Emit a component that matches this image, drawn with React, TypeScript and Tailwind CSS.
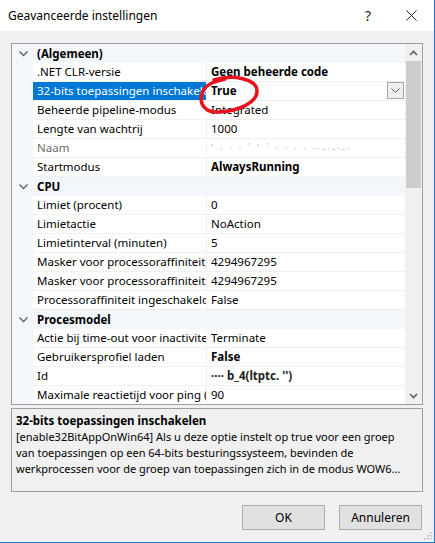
import React from "react";

type Row =
  | { kind: "cat"; label: string }
  | { kind: "prop"; name: string; value: string; bold?: boolean; dim?: boolean; selected?: boolean; blur?: string };

const rows: Row[] = [
  { kind: "cat", label: "(Algemeen)" },
  { kind: "prop", name: ".NET CLR-versie", value: "Geen beheerde code", bold: true },
  { kind: "prop", name: "32-bits toepassingen inschakelen", value: "True", bold: true, selected: true },
  { kind: "prop", name: "Beheerde pipeline-modus", value: "Integrated" },
  { kind: "prop", name: "Lengte van wachtrij", value: "1000" },
  { kind: "prop", name: "Naam", value: "", dim: true, blur: "naam" },
  { kind: "prop", name: "Startmodus", value: "AlwaysRunning", bold: true },
  { kind: "cat", label: "CPU" },
  { kind: "prop", name: "Limiet (procent)", value: "0" },
  { kind: "prop", name: "Limietactie", value: "NoAction" },
  { kind: "prop", name: "Limietinterval (minuten)", value: "5" },
  { kind: "prop", name: "Masker voor processoraffiniteit", value: "4294967295" },
  { kind: "prop", name: "Masker voor processoraffiniteit (64-bits-optie)", value: "4294967295" },
  { kind: "prop", name: "Processoraffiniteit ingeschakeld", value: "False" },
  { kind: "cat", label: "Procesmodel" },
  { kind: "prop", name: "Actie bij time-out voor inactiviteit", value: "Terminate" },
  { kind: "prop", name: "Gebruikersprofiel laden", value: "False", bold: true },
  { kind: "prop", name: "Id", value: "", blur: "id" },
  { kind: "prop", name: "Maximale reactietijd voor ping (seconden)", value: "90" },
];

function Chevron() {
  return (
    <svg width="9" height="6" viewBox="0 0 9 6" className="text-[#606060]">
      <polyline points="0.5,0.5 4.5,4.5 8.5,0.5" fill="none" stroke="currentColor" strokeWidth="1.3" />
    </svg>
  );
}

function BlurValue({ which }: { which: string }) {
  if (which === "naam") {
    return (
      <span className="text-[10px] tracking-[2px] text-[#c4c4c4]">
        ' · ·  ·  ´ ' `    ·  ·   ·   ·   ··-·-·-·
      </span>
    );
  }
  return <span className="font-bold text-[#222]">···· b_4(ltptc.    '')</span>;
}

function GridRow({ row }: { row: Row }) {
  if (row.kind === "cat") {
    return (
      <div className="flex h-[19px] bg-[#f3f6fa]">
        <div className="flex w-[21px] items-center justify-center pl-[1px]">
          <Chevron />
        </div>
        <div className="flex items-center pl-[4px] font-bold text-black">{row.label}</div>
      </div>
    );
  }
  return (
    <div className="flex h-[19px]">
      <div className="w-[21px] bg-[#f3f6fa]" />
      <div
        className={
          "flex w-[174px] items-center overflow-hidden whitespace-nowrap border-b border-r border-[#f0f0f0] pl-[4px] " +
          (row.selected ? "bg-[#0078d7] text-white" : row.dim ? "bg-white text-[#6d6d6d]" : "bg-white text-black")
        }
      >
        {row.name}
      </div>
      <div className="relative flex flex-1 items-center overflow-hidden whitespace-nowrap border-b border-[#f0f0f0] bg-white pl-[4px]">
        {row.blur ? (
          <BlurValue which={row.blur} />
        ) : (
          <span className={row.bold ? "font-bold text-black" : "text-black"}>{row.value}</span>
        )}
        {row.selected && (
          <div className="absolute right-[1px] top-[0px] flex h-[17px] w-[17px] items-center justify-center border border-[#a6a6a6] bg-[#efefef]">
            <svg width="9" height="5" viewBox="0 0 9 5">
              <polyline points="0.5,0.5 4.5,4.5 8.5,0.5" fill="none" stroke="#606060" strokeWidth="1" />
            </svg>
          </div>
        )}
      </div>
    </div>
  );
}

export default function App() {
  return (
    <div
      className="relative flex h-[543px] w-[435px] flex-col overflow-hidden border-b border-r border-[#1a79d1] bg-[#f0f0f0] text-[11.5px] leading-none text-black"
      style={{ fontFamily: '"Noto Sans", "Open Sans", sans-serif' }}
    >
      {/* title bar */}
      <div className="flex h-[31px] items-center bg-white">
        <div className="flex-1 pl-[8px] text-[12px] text-black">Geavanceerde instellingen</div>
        <div className="w-[40px] text-center text-[14px] text-[#222]">?</div>
        <div className="flex w-[46px] items-center justify-center">
          <svg width="11" height="11" viewBox="0 0 11 11">
            <path d="M0.5 0.5 L10.5 10.5 M10.5 0.5 L0.5 10.5" stroke="#222" strokeWidth="1" />
          </svg>
        </div>
      </div>

      <div className="flex flex-1 flex-col px-[11px] pt-[12px]">
        {/* property grid */}
        <div className="flex h-[362px] border border-[#a0a0a0] bg-white">
          <div className="flex-1 overflow-hidden">
            {rows.map((r, i) => (
              <GridRow key={i} row={r} />
            ))}
          </div>
          <div className="flex w-[17px] flex-col bg-[#f0f0f0]">
            <div className="flex h-[17px] items-center justify-center">
              <svg width="9" height="6" viewBox="0 0 9 6">
                <polyline points="1,5 4.5,1.5 8,5" fill="none" stroke="#606060" strokeWidth="1.6" />
              </svg>
            </div>
            <div className="mx-[1px] h-[127px] bg-[#cdcdcd]" />
            <div className="flex-1" />
            <div className="flex h-[17px] items-center justify-center">
              <svg width="9" height="6" viewBox="0 0 9 6">
                <polyline points="1,1 4.5,4.5 8,1" fill="none" stroke="#606060" strokeWidth="1.6" />
              </svg>
            </div>
          </div>
        </div>

        {/* description */}
        <div className="mt-[3px] h-[84px] border border-[#a0a0a0] px-[4px] pt-[4px] text-[11px]">
          <div className="font-bold leading-[16px] text-[11.5px]">32-bits toepassingen inschakelen</div>
          <div className="whitespace-nowrap leading-[16px]">
            [enable32BitAppOnWin64] Als u deze optie instelt op true voor een groep
          </div>
          <div className="whitespace-nowrap leading-[16px]">
            van toepassingen op een 64-bits besturingssysteem, bevinden de
          </div>
          <div className="whitespace-nowrap leading-[16px]">
            werkprocessen voor de groep van toepassingen zich in de modus WOW6...
          </div>
        </div>

        {/* buttons */}
        <div className="mt-[13px] flex justify-end gap-[14px] pr-[1px]">
          <button className="h-[25px] w-[83px] border border-[#adadad] bg-[#e1e1e1] text-[12px] text-black">
            OK
          </button>
          <button className="h-[25px] w-[83px] border border-[#adadad] bg-[#e1e1e1] text-[12px] text-black">
            Annuleren
          </button>
        </div>
      </div>

      {/* resize grip */}
      <svg className="absolute bottom-[2px] right-[2px]" width="9" height="9" viewBox="0 0 9 9">
        {[
          [7, 1],
          [4, 4],
          [7, 4],
          [1, 7],
          [4, 7],
          [7, 7],
        ].map(([x, y], i) => (
          <rect key={i} x={x} y={y} width="1.5" height="1.5" fill="#b8b8b8" />
        ))}
      </svg>

      {/* red hand-drawn circle */}
      <svg className="pointer-events-none absolute left-0 top-0" width="435" height="543" viewBox="0 0 435 543">
        <path
          d="M214 80 C233 74, 257 79, 257 91 C257 103, 238 111, 219 112 C205 113, 199 104, 202 94 C204 86, 211 82, 225 79"
          fill="none"
          stroke="#e8131b"
          strokeWidth="3.5"
          strokeLinecap="round"
        />
      </svg>
    </div>
  );
}
